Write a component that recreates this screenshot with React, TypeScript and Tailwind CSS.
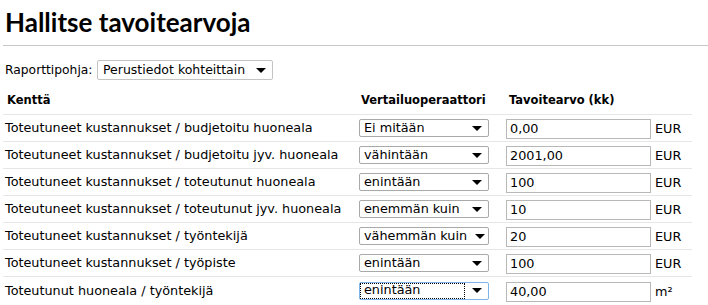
import React from "react";

const rows: { label: string; op: string; value: string; unit: string; focus?: boolean }[] = [
  { label: "Toteutuneet kustannukset / budjetoitu huoneala", op: "Ei mitään", value: "0,00", unit: "EUR" },
  { label: "Toteutuneet kustannukset / budjetoitu jyv. huoneala", op: "vähintään", value: "2001,00", unit: "EUR" },
  { label: "Toteutuneet kustannukset / toteutunut huoneala", op: "enintään", value: "100", unit: "EUR" },
  { label: "Toteutuneet kustannukset / toteutunut jyv. huoneala", op: "enemmän kuin", value: "10", unit: "EUR" },
  { label: "Toteutuneet kustannukset / työntekijä", op: "vähemmän kuin", value: "20", unit: "EUR" },
  { label: "Toteutuneet kustannukset / työpiste", op: "enintään", value: "100", unit: "EUR" },
  { label: "Toteutunut huoneala / työntekijä", op: "enintään", value: "40,00", unit: "m²", focus: true },
];

function Arrow() {
  return (
    <svg width="10" height="5" viewBox="0 0 10 5" className="shrink-0">
      <path d="M0 0 L10 0 L5 5 Z" fill="#000" />
    </svg>
  );
}

function Select({ text, focus }: { text: string; focus?: boolean }) {
  return (
    <div
      className={`flex items-center h-[18px] w-[130px] bg-white rounded-[2px] border ${
        focus ? "border-[#7eb4ea]" : "border-[#a9a9a9]"
      } pl-[1px] pr-[6px]`}
    >
      <div
        className={`flex-1 h-[14px] flex items-center pl-[3px] ${
          focus ? "outline outline-1 outline-dotted outline-black" : ""
        } mr-[8px]`}
      >
        <span className="leading-none whitespace-nowrap">{text}</span>
      </div>
      <Arrow />
    </div>
  );
}

export default function App() {
  return (
    <div
      className="bg-white text-black w-[708px] h-[305px] overflow-hidden text-[12.8px]"
      style={{ fontFamily: '"DejaVu Sans", Verdana, sans-serif' }}
    >
      <div className="pl-[5px] pt-[10px] h-[45px]">
        <h1
          className="text-[26px] font-bold leading-[25px] text-black"
          style={{ fontFamily: 'Lato, "DejaVu Sans", sans-serif' }}
        >
          Hallitse tavoitearvoja
        </h1>
      </div>
      <div className="ml-[3px] h-px bg-[#c8c8c8]" />
      <div className="flex items-center pl-[5px] mt-[14px] h-[20px]">
        <span className="w-[92px] text-[12.3px] whitespace-nowrap">Raporttipohja:</span>
        <div className="flex items-center h-[20px] w-[176px] border border-[#c3c3c3] rounded-[2px] pl-[5px] pr-[6px]">
          <span className="flex-1 whitespace-nowrap text-[12.5px]">Perustiedot kohteittain</span>
          <Arrow />
        </div>
      </div>
      <div className="mt-[8px] pl-[3px] w-[692px]">
        <div className="flex items-center h-[27px] border-b border-[#e6e6e6] font-bold text-[11.5px]">
          <div className="w-[356px] pl-[4px]">Kenttä</div>
          <div className="w-[146px] pl-[2px]">Vertailuoperaattori</div>
          <div className="pl-[4px]">Tavoitearvo (kk)</div>
        </div>
        {rows.map((r, i) => (
          <div
            key={i}
            className={`flex items-center h-[27px] ${i < rows.length - 1 ? "border-b border-[#e6e6e6]" : ""}`}
          >
            <div className="w-[356px] pl-[2px] whitespace-nowrap">{r.label}</div>
            <div className="w-[147px]">
              <Select text={r.op} focus={r.focus} />
            </div>
            <div className="w-[145px] h-[20px] border border-[#b8b8b8] bg-white flex items-center pl-[3px] mt-[2px]">
              {r.value}
            </div>
            <div className="pl-[4px] mt-[2px]">{r.unit}</div>
          </div>
        ))}
      </div>
    </div>
  );
}
